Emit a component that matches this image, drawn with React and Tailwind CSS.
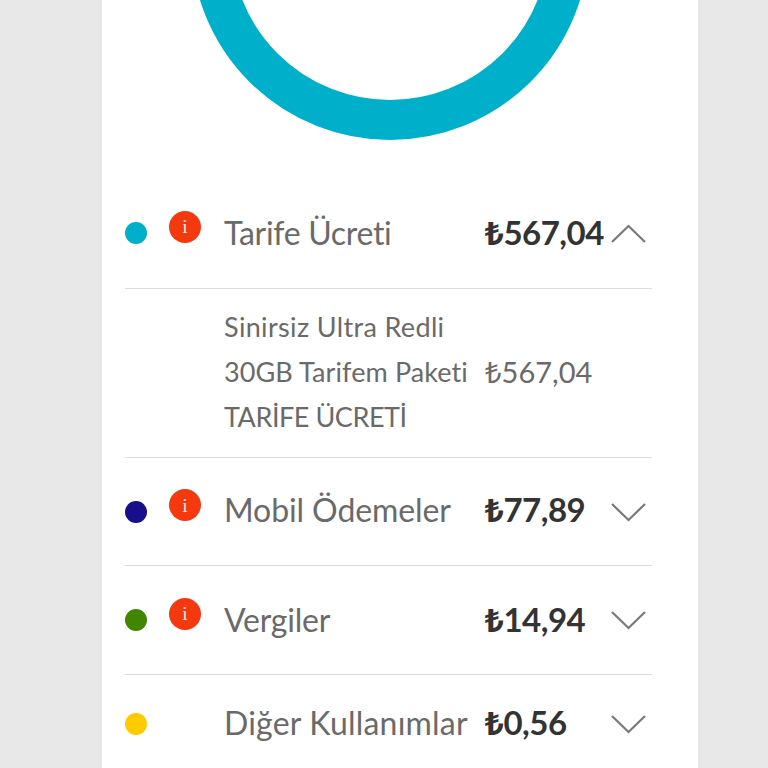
const font = { sans: "font-['Lato','Noto_Sans',sans-serif]" };

function InfoBadge() {
  return (
    <span className="flex h-8 w-8 items-center justify-center rounded-full bg-[#f5390f] font-['Liberation_Serif',serif] text-[19px] leading-none text-[#ffe9df]">
      i
    </span>
  );
}

function Lira() {
  return <span className="font-['Noto_Sans',sans-serif]">₺</span>;
}

function Chevron({ open }) {
  return (
    <svg width="36" height="20" viewBox="0 0 36 20" fill="none" stroke="#7a7a7a" strokeWidth="2.2" className="shrink-0">
      <path d={open ? "M1 19 17.5 3 34 19" : "M1 2 17.5 18 34 2"} />
    </svg>
  );
}

function Row({ color, label, amount, info, open, className, labelClass, textClass = "" }) {
  return (
    <div className={`flex items-center border-b border-[#dcdcdc] ${className}`}>
      <span className={`h-[22px] w-[22px] shrink-0 rounded-full ${color}`} />
      <span className="ml-[22px] -mt-[13px] w-8 shrink-0">{info && <InfoBadge />}</span>
      <span className={`ml-[23px] w-[261px] shrink-0 whitespace-nowrap text-[32px] text-[#6a6a6a] ${labelClass} ${textClass}`}>{label}</span>
      <span className={`w-[126px] shrink-0 whitespace-nowrap text-[33px] font-bold tracking-[-0.5px] text-[#333333] ${textClass}`}>
        <Lira />
        {amount}
      </span>
      <Chevron open={open} />
    </div>
  );
}

export default function App() {
  return (
    <div className={`h-[768px] overflow-hidden bg-[#e8e8e8] ${font.sans}`}>
      <div className="ml-[102px] h-full w-[596px] bg-white px-[23px]">
        <svg width="550" height="140" viewBox="0 0 550 140" className="block">
          <circle cx="265" cy="-59" r="179" fill="none" stroke="#00b0ca" strokeWidth="40" />
        </svg>
        <div className="w-[527px]">
          <Row color="bg-[#00b0ca]" label="Tarife Ücreti" amount="567,04" info open className="mt-[38px] h-[111px]" labelClass="tracking-[-0.3px]" textClass="-mt-[1px]" />
          <div className="flex h-[169px] items-center border-b border-[#dcdcdc] pb-[3px] pl-[99px] text-[27px] leading-[45px] text-[#6a6a6a]">
            <div className="w-[261px] whitespace-nowrap">
              <p className="tracking-[0.35px]">Sinirsiz Ultra Redli</p>
              <p className="tracking-[0.1px]">30GB Tarifem Paketi</p>
              <p className="tracking-[-0.45px]">TARİFE ÜCRETİ</p>
            </div>
            <span className="whitespace-nowrap text-[29px]">
              <Lira />
              567,04
            </span>
          </div>
          <Row color="bg-[#170e8c]" label="Mobil Ödemeler" amount="77,89" info className="h-[108px]" labelClass="tracking-[-0.1px]" textClass="-mt-[3px]" />
          <Row color="bg-[#428600]" label="Vergiler" amount="14,94" info className="h-[109px]" labelClass="tracking-[-0.2px]" />
          <Row color="bg-[#fecb00]" label="Diğer Kullanımlar" amount="0,56" className="h-[98px] border-b-0" labelClass="tracking-[0.2px]" textClass="-mt-[3px]" />
        </div>
      </div>
    </div>
  );
}
